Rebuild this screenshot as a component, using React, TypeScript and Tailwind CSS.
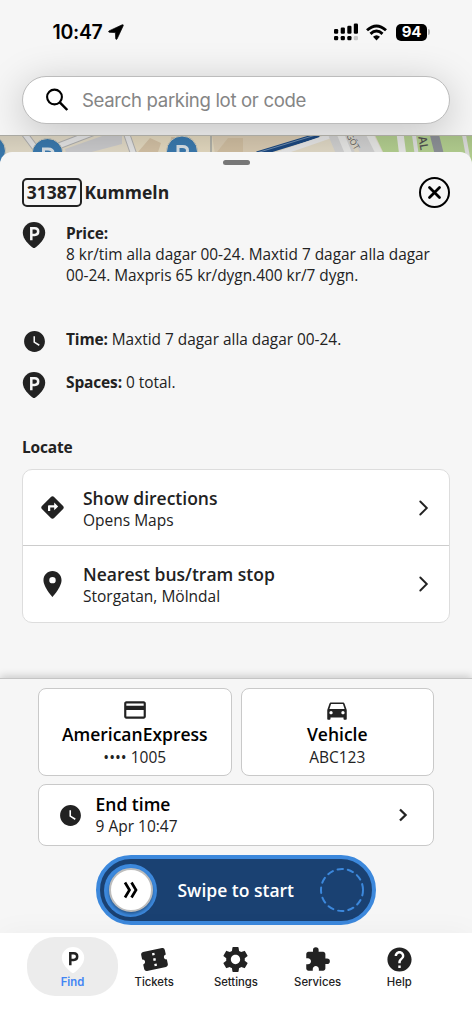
import type { ReactNode } from "react";
import {
  MdConfirmationNumber,
  MdCreditCard,
  MdDirections,
  MdDirectionsCar,
  MdExtension,
  MdHelp,
  MdPlace,
  MdSettings,
  MdWatchLater,
} from "react-icons/md";

const ParkingPin = ({ fill, letter }: { fill: string; letter: string }) => (
  <svg width="24" height="28" viewBox="0 0 24 28">
    <path d="M12 1C5.700 1 .8 5.800 .8 11.700C.8 18 6.500 23.300 10.600 26.500Q12 27.500 13.400 26.500C17.500 23.300 23.200 18 23.200 11.700C23.200 5.800 18.300 1 12 1Z" fill={fill} />
    <path d="M9.300 19.300V7.300H12.800Q16.200 7.300 16.200 10.600Q16.200 13.900 12.800 13.900H9.300" fill="none" stroke={letter} strokeWidth="2.500" />
  </svg>
);

const Chevron = ({ small }: { small?: boolean }) => (
  <svg width="12" height="18" viewBox="0 0 12 18" fill="none" stroke="#222" strokeLinecap="round">
    {small ? (
      <path d="M3 3.500L8.600 9L3 14.500" strokeWidth="2.300" strokeLinecap="butt" />
    ) : (
      <path d="M2.300 2.500L8.800 9L2.300 15.500" strokeWidth="1.900" />
    )}
  </svg>
);

const StatusBar = () => (
  <div className="flex h-[64px] items-center justify-between pr-[42px] pl-[52.5px]">
    <div className="flex items-center gap-[5px] text-[19.5px] leading-6 font-semibold tracking-[-0.3px]">
      10:47
      <svg width="16" height="16" viewBox="0 0 16 16">
        <path d="M1 6.900L14.200 .8Q15.700 .4 15.200 1.800L9 15Q8.100 16 7.700 14.800L7.400 8.600L1.200 8.300Q0 7.900 1 6.900Z" stroke="#000" strokeWidth=".7" />
      </svg>
    </div>
    <div className="flex items-center">
      <svg width="25" height="18" viewBox="0 0 25 18">
        <g fill="#000">
          <rect x="1" y="6" width="4.200" height="4.700" rx="1.200" />
          <rect x="7.700" y="4.500" width="4.200" height="6.200" rx="1.200" />
          <rect x="14.300" y="2.700" width="4.200" height="8" rx="1.200" />
          <rect x="20.800" y=".5" width="4.200" height="10.300" rx="1.200" />
          <rect x="1" y="13" width="4.200" height="4.200" rx="1.200" />
          <rect x="7.700" y="13" width="4.200" height="4.200" rx="1.200" />
          <rect x="14.300" y="13" width="4.200" height="4.200" rx="1.200" />
        </g>
        <rect x="20.800" y="13" width="4.200" height="4.200" rx="1.200" fill="#c8c8c8" />
      </svg>
      <svg className="ml-[8px]" width="21" height="17" viewBox="0 0 21 17" fill="none" stroke="#000" strokeWidth="2.900">
        <path d="M1 6.300Q10.500 -2.300 20 6.300" />
        <path d="M4.500 9.900Q10.500 4.300 16.500 9.900" />
        <path d="M7 12.800Q10.500 9.500 14 12.800L10.500 16.400Z" fill="#000" stroke="none" />
      </svg>
      <span className="ml-[9px] flex h-[17px] w-[31px] items-center justify-center rounded-[5px] bg-black text-[15px] font-bold tracking-[-0.3px] text-white">
        94
      </span>
      <span className="ml-px h-[6px] w-[2px] rounded-r bg-[#b4b4b4]" />
    </div>
  </div>
);

const MapStrip = () => (
  <svg className="block" width="472" height="40" viewBox="0 0 472 40">
    <defs>
      <linearGradient id="shade" x1="0" y1="0" x2="0" y2="1">
        <stop offset="0" stopColor="#000" stopOpacity=".15" />
        <stop offset=".5" stopColor="#000" stopOpacity=".08" />
      </linearGradient>
    </defs>
    <rect width="472" height="40" fill="#eee6d2" />
    <path d="M130 0H225L208 40H132Z" fill="#f0e5ca" />
    <path d="M212 0H310L245 26H216Z" fill="#e5d6bc" />
    <path d="M150 3L161 8L158 17H138ZM171 2H190V12H170Z" fill="#dfccae" />
    <path d="M228 3H243V17H217Z" fill="#dcc9aa" />
    <path d="M65 14L105 0H122V9L88 18H66Z" fill="#d6d6d8" />
    <path d="M375 0H472V40H394Z" fill="#bedb98" />
    <g fill="none">
      <path d="M24 -2L42 22M48 15L100 -5M126 -3L134 20" stroke="#bbb" strokeWidth="7" />
      <path d="M24 -2L42 22M48 15L100 -5M126 -3L134 20" stroke="#f2f2f2" strokeWidth="5" />
      <path d="M211 0V20" stroke="#bcbcb2" strokeWidth="2" />
      <path d="M257 19L319 0" stroke="#1d4c87" strokeWidth="5" />
      <path d="M258 17.500L319 -1" stroke="#8ea9c7" strokeWidth=".8" />
      <path d="M278 19L333 0" stroke="#f4f4f4" strokeWidth="5" />
      <path d="M337 -2L347 22M360 -3L372 22" stroke="#ddd" strokeWidth="18" />
      <path d="M340 -2L350 22M369 -2L381 22M400 -2L403 22" stroke="#f5f5f3" strokeWidth="7" />
      <path d="M414 0L417 22M464 0L468 22" stroke="#ececec" strokeWidth="4" />
      <path d="M434 -2L440 22" stroke="#969aa0" strokeWidth="9" />
    </g>
    <g fill="#666" fontFamily="Open Sans, sans-serif">
      <text transform="translate(346 .5) rotate(60)" fontSize="8.500">GÖT</text>
      <text transform="translate(417 -5) rotate(80)" fontSize="11.500" fill="#555" fontWeight="600">VAL</text>
    </g>
    {[[-10, 16], [47.500, 19], [182, 16.500]].map(([x, y]) => (
      <g key={x}>
        <circle cx={x} cy={y} r="15.500" fill="#3d80b8" stroke="#ddd8c8" strokeWidth="1" />
        <path d={`M${x - 4} ${y + 8}V${y - 5}h4.500q5 0 5 4t-5 4h-4.500`} stroke="#e5edf3" strokeWidth="3" fill="none" />
      </g>
    ))}
    <rect width="472" height="40" fill="url(#shade)" />
    <path d="M0 .5H472" stroke="#aaa9a2" />
  </svg>
);

const LocateRow = ({ icon, title, text }: { icon: ReactNode; title: string; text: string }) => (
  <button className="flex h-[76px] w-full items-center pr-[19px] pl-[14px] text-left">
    <span className="flex w-[31px] justify-center">{icon}</span>
    <span className="ml-[15px] flex-1">
      <span className="block text-[17.5px] leading-6 font-semibold">{title}</span>
      <span className="block text-[15.5px] leading-5">{text}</span>
    </span>
    <Chevron />
  </button>
);

const PayCard = ({ icon, title, text }: { icon: ReactNode; title: string; text: string }) => (
  <button className="flex h-[88px] flex-1 flex-col items-center rounded-[8px] border border-[#c9c9c9] bg-white pt-[8px]">
    {icon}
    <span className="text-[17.5px] leading-[23px] font-semibold text-black">{title}</span>
    <span className="text-[15.5px] leading-[22px]">{text}</span>
  </button>
);

const tabs = [
  { label: "Find", icon: <ParkingPin fill="#fff" letter="#222" />, active: true },
  { label: "Tickets", icon: <MdConfirmationNumber className="-rotate-12" size={29} /> },
  { label: "Settings", icon: <MdSettings size={31} /> },
  { label: "Services", icon: <MdExtension size={27} /> },
  { label: "Help", icon: <MdHelp size={29} /> },
];

const App = () => {
  return (
    <div className="flex h-[1024px] w-[472px] flex-col overflow-hidden bg-[#f6f6f6] font-['Open_Sans',sans-serif] text-[#222]">
      <header className="h-[135px] shrink-0 overflow-hidden bg-[#f6f6f6] font-['Inter',sans-serif] text-black">
        <StatusBar />
        <div className="mx-[22px] mt-[12px] flex h-[48px] items-center rounded-full border-[1.5px] border-[#bcbcbc] bg-white pl-[22px] shadow-[0_8px_40px_rgba(0,0,0,0.22)]">
          <svg width="25" height="25" viewBox="0 0 25 25" fill="none" stroke="#000" strokeWidth="2.100">
            <circle cx="9.500" cy="9" r="7.400" />
            <path d="M14.800 14.300L22.300 22" strokeWidth="2.500" />
          </svg>
          <span className="ml-[12px] pt-[2px] text-[18.6px] tracking-[-0.34px] text-[#858585]">Search parking lot or code</span>
        </div>
      </header>
      <MapStrip />

      <main className="relative -mt-[23px] h-[526px] shrink-0 rounded-t-[12px] bg-[#f6f6f6] px-[22px] pt-[8px]">
        <div className="mx-auto h-[5px] w-[27px] rounded-full bg-[#777]" />
        <div className="mt-[11px] flex h-[32px] items-center justify-between">
          <h1 className="flex items-center gap-[3px] text-[17.5px] font-bold">
            <span className="flex h-[29px] w-[59.5px] items-center justify-center rounded-[5px] border-2 border-[#222]">31387</span>
            Kummeln
          </h1>
          <button className="flex size-[31px] items-center justify-center rounded-full border-2 border-black">
            <svg width="15" height="15" viewBox="0 0 15 15" stroke="#000" strokeWidth="2.800" strokeLinecap="round">
              <path d="M2.500 2.500L12.500 12.500M12.500 2.500L2.500 12.500" />
            </svg>
          </button>
        </div>
        <div className="mt-[13px] flex h-[108px] gap-[19px] text-[15.4px] leading-[21px]">
          <span className="w-[25px]"><ParkingPin fill="#222" letter="#f6f6f6" /></span>
          <p className="flex-1 pt-[2px] whitespace-nowrap">
            <b className="text-[15.5px] tracking-[-0.2px]">Price:</b><br />
            8 kr/tim alla dagar 00-24. Maxtid 7 dagar alla dagar<br />
            00-24. Maxpris 65 kr/dygn.400 kr/7 dygn.
          </p>
        </div>
        <div className="flex h-[42px] gap-[19px] text-[15.4px] leading-5">
          <MdWatchLater className="h-[25px] w-[25px]" />
          <p><b className="text-[15.5px] tracking-[-0.15px]">Time:</b> Maxtid 7 dagar alla dagar 00-24.</p>
        </div>
        <div className="flex h-[66px] gap-[19px] text-[15.4px] leading-5">
          <span className="w-[25px]"><ParkingPin fill="#222" letter="#f6f6f6" /></span>
          <p className="pt-px"><b className="text-[15.5px] tracking-[-0.15px]">Spaces:</b> 0 total.</p>
        </div>
        <h2 className="text-[15.5px] leading-5 font-bold tracking-[-0.2px]">Locate</h2>
        <div className="mt-[12px] divide-y divide-[#ccc] rounded-[10px] border border-[#ddd] bg-white">
          <LocateRow icon={<MdDirections size={27} />} title="Show directions" text="Opens Maps" />
          <LocateRow icon={<MdPlace size={32} />} title="Nearest bus/tram stop" text="Storgatan, Mölndal" />
        </div>
      </main>

      <section className="relative h-[255px] shrink-0 border-t border-[#c4c4c4] bg-[#f6f6f6] px-[38px] pt-[9px] shadow-[0_-2px_8px_rgba(0,0,0,0.18)]">
        <div className="flex gap-[9px]">
          <PayCard icon={<MdCreditCard size={26} />} title="AmericanExpress" text="•••• 1005" />
          <PayCard icon={<MdDirectionsCar size={26} />} title="Vehicle" text="ABC123" />
        </div>
        <button className="mt-[8px] flex h-[62px] w-full items-center rounded-[8px] border border-[#c9c9c9] bg-white pr-[24px] pl-[19px] text-left">
          <MdWatchLater size={25} />
          <span className="ml-[12.5px] flex-1">
            <span className="block text-[17.5px] leading-[22px] font-semibold text-black">End time</span>
            <span className="block text-[15.5px] leading-[22px]">9 Apr 10:47</span>
          </span>
          <Chevron small />
        </button>
        <div className="mx-auto mt-[9px] flex h-[70px] w-[280px] items-center rounded-full border-4 border-[#3c88dc] bg-[#1a4172] pl-[4px]">
          <div className="flex size-[53px] shrink-0 items-center justify-center rounded-full bg-[#3c88dc]">
            <div className="flex size-[44px] items-center justify-center rounded-full border-2 border-[#bdbdbd] bg-white shadow-[0_2px_3px_rgba(0,0,0,0.35)]">
              <svg width="18" height="18" viewBox="0 0 18 18" fill="none" stroke="#000" strokeWidth="2.700">
                <path d="M3 1.500L7.500 9L3 16.500M9.500 1.500L14 9L9.500 16.500" />
              </svg>
            </div>
          </div>
          <span className="ml-[20.5px] w-[142px] text-[17.5px] font-semibold text-white">Swipe to start</span>
          <svg width="44" height="44" viewBox="0 0 44 44" fill="none" stroke="#3c88dc" strokeWidth="2">
            <circle cx="22" cy="22" r="21" strokeDasharray="5.500 4.924" strokeLinecap="round" />
          </svg>
        </div>
      </section>

      <nav className="relative flex h-[91px] bg-white pt-[4px] pl-[27px] font-['Inter',sans-serif] shadow-[0_0_30px_rgba(0,0,0,0.04)]">
        {tabs.map((tab) => (
          <button
            key={tab.label}
            className={`flex h-[59px] w-[91px] shrink-0 flex-col items-center rounded-[28px] text-[11.3px] font-medium not-first:-ml-[9.3px] ${tab.active ? "bg-[#ececec] text-[#4285f4]" : "text-[#222]"}`}
          >
            <span className="mt-[7px] flex h-[31px] items-center justify-center">{tab.icon}</span>
            <span className={`leading-[15px] ${tab.active ? "font-semibold" : ""}`}>{tab.label}</span>
          </button>
        ))}
      </nav>
    </div>
  );
};

export default App;
